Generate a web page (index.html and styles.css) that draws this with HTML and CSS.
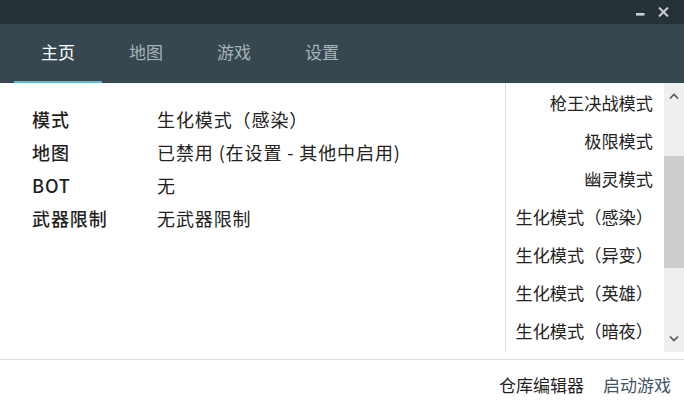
FILE: index.html
```html
<!DOCTYPE html>
<html lang="zh-CN">
<head>
<meta charset="utf-8">
<link rel="stylesheet" href="styles.css">
</head>
<body>
<div class="app">
  <div class="titlebar">
    <span class="win-btn" title="最小化"><svg width="9" height="10" viewBox="0 0 9 10"><rect x="0" y="6" width="8.5" height="2.6" fill="#cbd3d7"/></svg></span>
    <span class="win-btn" title="关闭"><svg width="11" height="10" viewBox="0 0 11 10"><path d="M1 0.5 L10 9.5 M10 0.5 L1 9.5" stroke="#cbd3d7" stroke-width="2"/></svg></span>
  </div>
  <nav class="tabs">
    <div class="tab active">主页</div>
    <div class="tab">地图</div>
    <div class="tab">游戏</div>
    <div class="tab">设置</div>
  </nav>
  <main class="main">
    <section class="info">
      <div class="row"><span class="label">模式</span><span class="value">生化模式（感染）</span></div>
      <div class="row"><span class="label">地图</span><span class="value">已禁用 (在设置 - 其他中启用)</span></div>
      <div class="row"><span class="label">BOT</span><span class="value">无</span></div>
      <div class="row"><span class="label">武器限制</span><span class="value">无武器限制</span></div>
    </section>
    <aside class="modes">
      <ul class="mode-list">
        <li>枪王决战模式</li>
        <li>极限模式</li>
        <li>幽灵模式</li>
        <li>生化模式（感染）</li>
        <li>生化模式（异变）</li>
        <li>生化模式（英雄）</li>
        <li>生化模式（暗夜）</li>
      </ul>
      <div class="scrollbar">
        <div class="sb-btn up"><svg width="10" height="6" viewBox="0 0 10 6"><path d="M1 5.5 L5 1.5 L9 5.5" fill="none" stroke="#555" stroke-width="1.6"/></svg></div>
        <div class="sb-track">
          <div class="sb-thumb"></div>
        </div>
        <div class="sb-btn down"><svg width="10" height="6" viewBox="0 0 10 6"><path d="M1 0.5 L5 4.5 L9 0.5" fill="none" stroke="#555" stroke-width="1.6"/></svg></div>
      </div>
    </aside>
  </main>
  <footer class="footer">
    <button class="btn">仓库编辑器</button>
    <button class="btn primary">启动游戏</button>
  </footer>
</div>
</body>
</html>
```
FILE: styles.css
```css
* { box-sizing: border-box; }
html, body { margin: 0; padding: 0; background: #fff; }
body {
  font-family: "Noto Sans CJK SC", "Noto Sans", sans-serif;
  width: 684px;
  height: 412px;
  overflow: hidden;
}
.app { display: flex; flex-direction: column; height: 412px; }

.titlebar {
  height: 24px;
  background: #263238;
  display: flex;
  justify-content: flex-end;
  align-items: flex-start;
  padding: 7px 15px 0 0;
  gap: 13px;
}
.win-btn { display: flex; line-height: 0; }

.tabs {
  height: 59px;
  background: #37474f;
  display: flex;
  padding-left: 14px;
}
.tab {
  width: 88px;
  display: flex;
  align-items: center;
  justify-content: center;
  font-size: 17px;
  color: #a9b4ba;
  border-bottom: 2px solid transparent;
  padding-bottom: 2px;
}
.tab.active { color: #ffffff; border-bottom-color: #5bb5dc; }

.main {
  height: 269px;
  display: flex;
}
.info {
  flex: 1;
  padding: 19px 0 0 32px;
  display: flex;
  flex-direction: column;
}
.row {
  display: flex;
  height: 33px;
  align-items: center;
  font-size: 18px;
  letter-spacing: 0.9px;
  color: #1f1f1f;
}
.label { width: 125px; font-weight: 500; }
.value { color: #222; }

.modes {
  width: 179px;
  border-left: 1px solid #dcdcdc;
  display: flex;
}
.mode-list {
  flex: 1;
  list-style: none;
  margin: 0;
  padding: 1px 11px 0 0;
  text-align: right;
  font-size: 17.2px;
  color: #222;
  overflow: hidden;
}
.mode-list li {
  height: 38px;
  line-height: 38px;
  white-space: nowrap;
}
.scrollbar {
  width: 20px;
  background: #efefef;
  display: flex;
  flex-direction: column;
}
.sb-btn {
  height: 26px;
  display: flex;
  align-items: center;
  justify-content: center;
}
.sb-btn.down { height: 22px; align-items: flex-start; padding-top: 6px; }
.sb-track { flex: 1; padding-top: 47px; }
.sb-thumb { height: 112px; background: #cdcdcd; }

.footer {
  margin-top: 7px;
  border-top: 1px solid #dcdcdc;
  flex: 1;
  display: flex;
  justify-content: flex-end;
  align-items: center;
  padding: 0 13px 4px 0;
  gap: 19px;
}
.btn {
  border: none;
  background: none;
  padding: 0;
  font-family: inherit;
  font-size: 17px;
  color: #1f1f1f;
}
.btn.primary { color: #3f5561; }
```
